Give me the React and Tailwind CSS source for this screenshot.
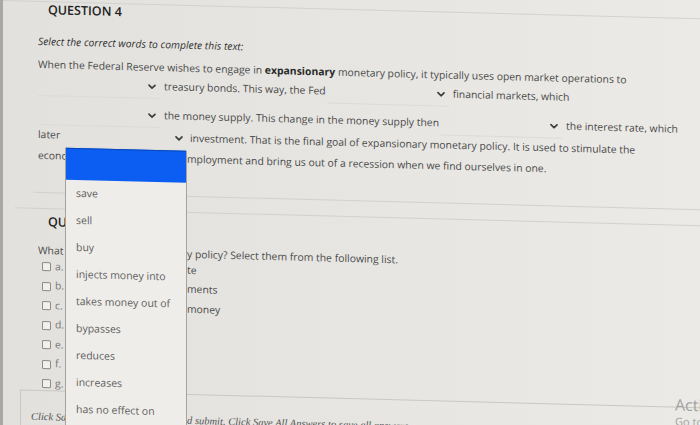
import React from 'react'

const body = { fontFamily: '"Open Sans", "Noto Sans", sans-serif' }
const serif = { fontFamily: '"Liberation Serif", "DejaVu Serif", serif' }

function Chevron() {
  return (
    <svg width="8" height="6" viewBox="0 0 8 6" className="shrink-0">
      <path d="M1 1.3 4 4.3 7 1.3" fill="none" stroke="#3d3d3d" strokeWidth="1.7" strokeLinecap="round" strokeLinejoin="round" />
    </svg>
  )
}

function Blank({ className = '' }) {
  return (
    <span className={`inline-flex h-[24px] w-[122px] shrink-0 items-center justify-end border-b border-[#dcdbd7] pr-[4px] ${className}`}>
      <Chevron />
    </span>
  )
}

// text hidden under the open dropdown list, clipped to a fixed width
function Hidden({ w, children }) {
  return <span className={`inline-block shrink-0 overflow-hidden whitespace-nowrap ${w}`}>{children}</span>
}

const choices = ['save', 'sell', 'buy', 'injects money into', 'takes money out of', 'bypasses', 'reduces', 'increases', 'has no effect on']

const options = [
  { k: 'a.', hidden: 'Lower the discount ra', rest: 'te' },
  { k: 'b.', hidden: 'Lower reserve require', rest: 'ments' },
  { k: 'c.', hidden: 'Increase the supply of ', rest: 'money' },
  { k: 'd.', hidden: 'Sell government bonds', rest: '' },
  { k: 'e.', hidden: 'Raise the prime rate', rest: '' },
  { k: 'f.', hidden: 'Buy government bonds', rest: '' },
  { k: 'g.', hidden: 'Raise reserve ratios', rest: '' },
]

export default function App() {
  return (
    <div className="relative h-[425px] w-[700px] overflow-hidden border-l-[3px] border-[#a9a8a4] bg-linear-to-r from-[#e2e1dd] to-[#ebeae6] text-[#4a4a4a]" style={body}>
      <div className="relative h-[440px] w-[700px] origin-top-left skew-y-[1.5deg]">
        {/* question 4 */}
        <div className="flex h-[18px] items-center border-t border-[#d3d2ce] pl-[45px] text-[12.5px] font-semibold text-[#222]">QUESTION 4</div>
        <div className="mt-[15px] flex h-[16px] items-center pl-[35px] text-[10.3px] italic text-[#333]">Select the correct words to complete this text:</div>

        <div className="mt-[6px] pl-[35px] text-[10.4px] whitespace-nowrap">
          <div className="flex h-[18px] items-center">
            When the Federal Reserve wishes to engage in&nbsp;<b className="font-bold text-[#2a2a2a]">expansionary</b>&nbsp;monetary policy, it typically uses open market operations to
          </div>
          <div className="mt-[1px] flex h-[18px] items-center">
            <Blank />
            <span className="ml-[4px]">treasury bonds. This way, the Fed</span>
            <Blank className="ml-[1px]" />
            <span className="ml-[4px]">financial markets, which</span>
          </div>
          <div className="mt-[11px] flex h-[18px] items-center">
            <Blank />
            <span className="ml-[4px]">the money supply. This change in the money supply then</span>
            <Blank className="ml-[1px]" />
            <span className="ml-[4px]">the interest rate, which</span>
          </div>
          <div className="mt-[4px] flex h-[18px] items-center">
            <span className="w-[27px]">later</span>
            <Blank />
            <span className="ml-[3px]">investment. That is the final goal of expansionary monetary policy. It is used to stimulate the</span>
          </div>
          <div className="mt-[3px] flex h-[18px] items-center">
            <Hidden w="w-[149px]">economy, promote full e</Hidden>
            <span>mployment and bring us out of a recession when we find ourselves in one.</span>
          </div>
        </div>

        <div className="ml-[30px] mt-[27px] border-t border-[#d2d1cd]" />
        <div className="ml-[12px] mt-[15px] border-t border-[#d2d1cd]" />

        {/* question 5 */}
        <div className="mt-[3px] flex h-[20px] items-center pl-[45px] text-[12.5px] font-semibold text-[#222]">QUESTION 5</div>
        <div className="mt-[10px] flex h-[18px] items-center whitespace-nowrap pl-[35px] text-[10.4px]">
          <Hidden w="w-[149px]">What are the tools of expansionar</Hidden>
          <span>y policy? Select them from the following list.</span>
        </div>
        <div className="-mt-[3px] pl-[39px] text-[10.4px] whitespace-nowrap">
          {options.map(o => (
            <div key={o.k} className="flex h-[19.5px] items-center">
              <span className="h-[9px] w-[9px] shrink-0 rounded-[1.5px] border border-[#8c8b88] bg-[#f1f0ed]" />
              <span className="ml-[4px] w-[15px] shrink-0 text-[#777]">{o.k}</span>
              <Hidden w="w-[117px]">{o.hidden}</Hidden>
              <span>{o.rest}</span>
            </div>
          ))}
        </div>

        <div className="ml-[17px] -mt-[4px] h-[60px] border-l border-t border-[#c9c8c4] pl-[10px] pt-[18px]">
          <div className="flex h-[16px] items-center whitespace-nowrap text-[10.5px] italic text-[#555]" style={serif}>
            <Hidden w="w-[156px]">Click Save and Submit to save an</Hidden>
            <span>d submit. Click Save All Answers to save all answers.</span>
          </div>
        </div>

        {/* open dropdown list */}
        <div className="absolute left-[62px] top-[146px] h-[300px] w-[122px] border-x border-[#a4a3a0] bg-[#eeedea]">
          <div className="h-[32px] border-t border-[#0a47b8] bg-[#0b5ef1]" />
          {choices.map(c => (
            <div key={c} className="flex h-[27px] items-center pl-[10px] text-[10.5px] text-[#5e5e5e]">{c}</div>
          ))}
        </div>

        <div className="absolute left-[672px] top-[377px] whitespace-nowrap text-[#a2a2a2]">
          <div className="text-[16px] leading-[20px]">Activate Windows</div>
          <div className="text-[11px] leading-[14px]">Go to Settings to activate Windows.</div>
        </div>
      </div>
    </div>
  )
}
